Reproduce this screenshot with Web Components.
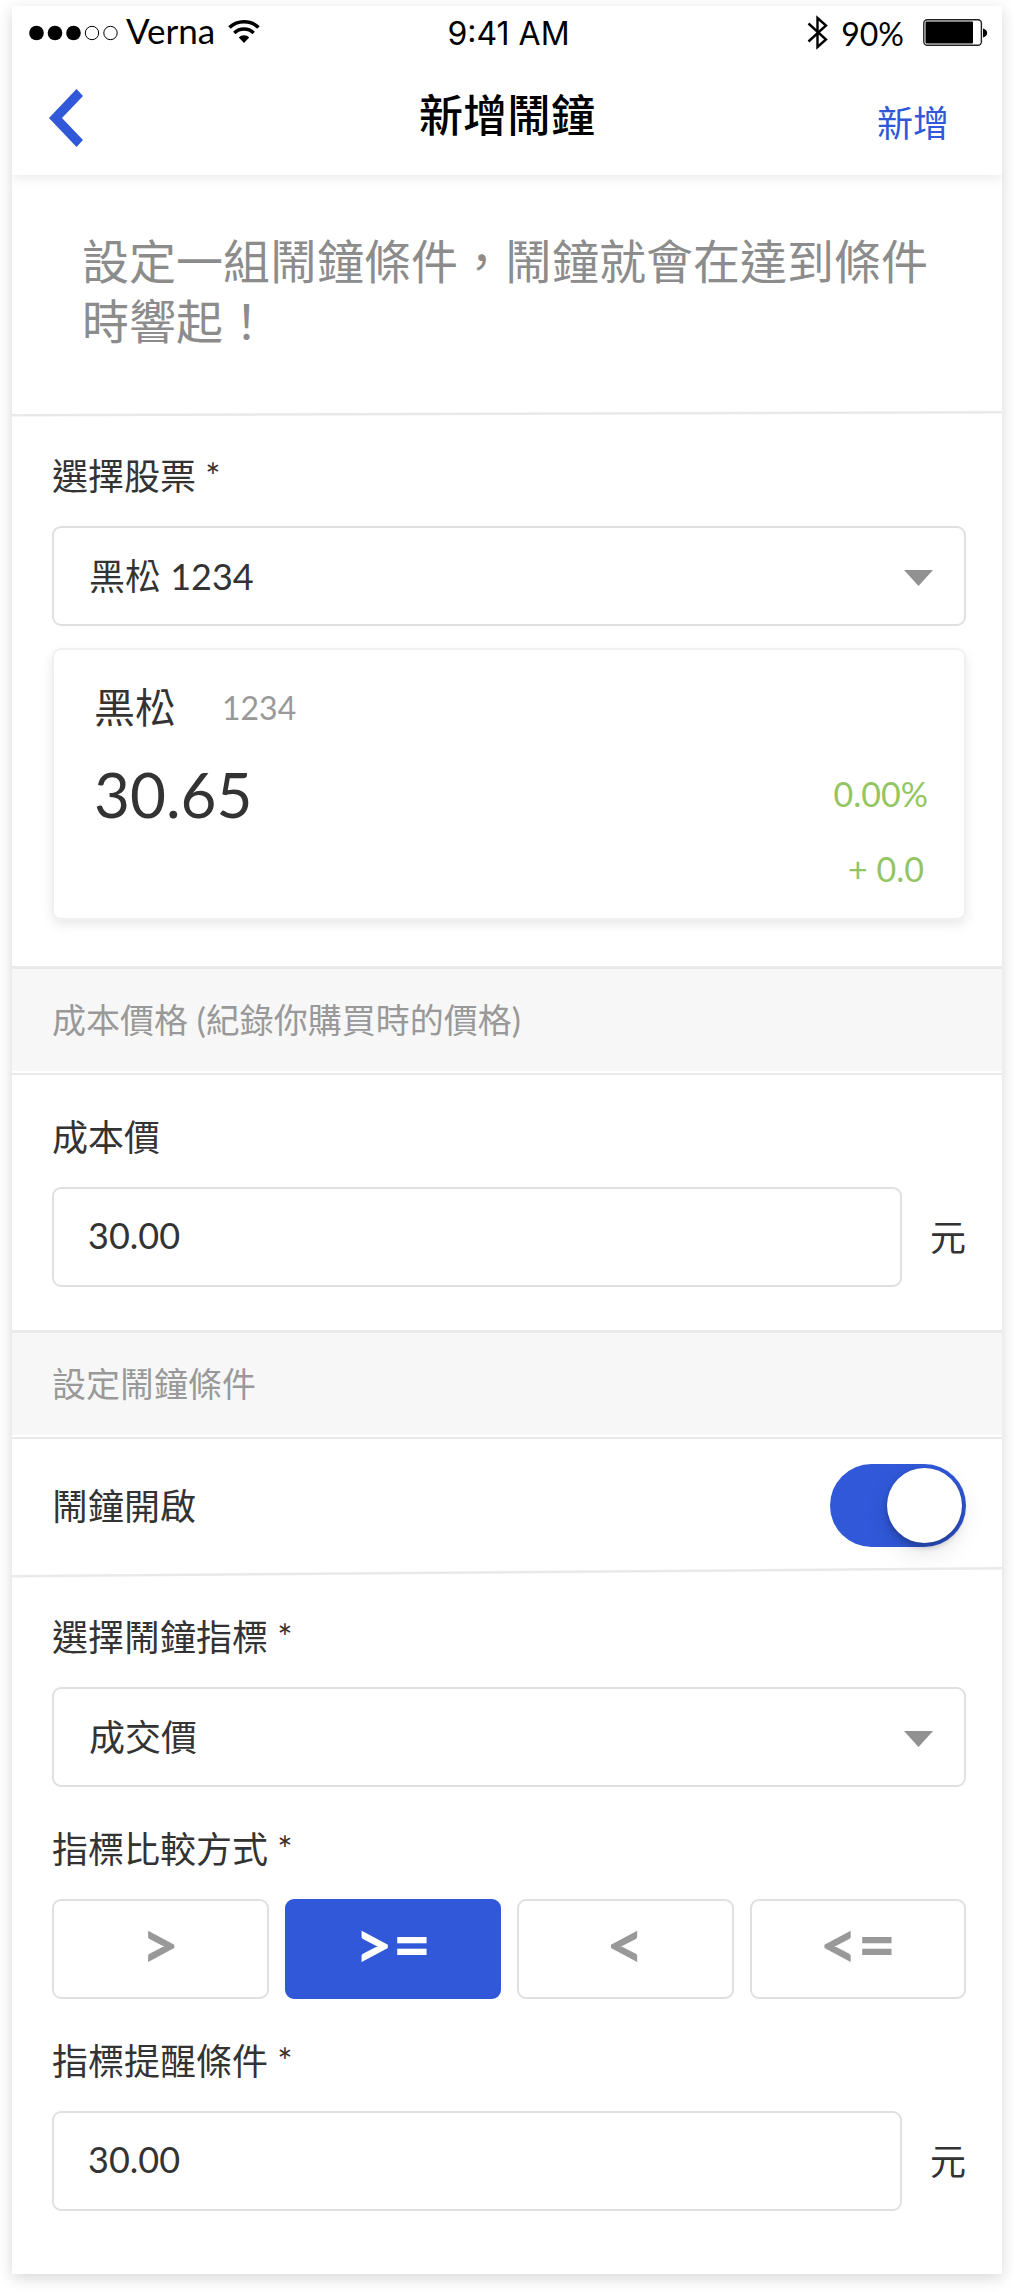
<!DOCTYPE html>
<html lang="zh-Hant">
<head>
<meta charset="utf-8">
<meta name="viewport" content="width=device-width, initial-scale=1">
<title>新增鬧鐘</title>
<style>
  :root {
    --brand: #3058d8;
    --ink: #333;
    --muted: #999;
    --line: #e9e9e9;
    --stroke: #e0e0e0;
    --up: #93c563;
    --gutter-start: 40px;
    --gutter-end: 36px;
  }
  body {
    margin: 0;
    background: #fff;
    color: var(--ink);
    font-family: Lato, "Noto Sans CJK TC", sans-serif;
    font-size: 36px;
    line-height: 44px;
  }
</style>
</head>
<body>
<alarm-screen>
  <status-bar slot="header"></status-bar>
  <nav-bar slot="header">新增鬧鐘<span slot="action">新增</span></nav-bar>

  <intro-text>設定一組鬧鐘條件，鬧鐘就會在達到條件時響起！</intro-text>
  <hair-line rise="3"></hair-line>
  <form-section after-line>
    <select-field value="黑松 1234">選擇股票 *</select-field>
    <stock-card name="黑松" code="1234" price="30.65" percent="0.00%" change="+ 0.0"></stock-card>
  </form-section>

  <section-title>成本價格 (紀錄你購買時的價格)</section-title>
  <form-section>
    <amount-field value="30.00" unit="元">成本價</amount-field>
  </form-section>

  <section-title>設定鬧鐘條件</section-title>
  <toggle-row>鬧鐘開啟</toggle-row>
  <hair-line rise="8"></hair-line>
  <form-section after-line last>
    <select-field value="成交價">選擇鬧鐘指標 *</select-field>
    <compare-field>指標比較方式 *</compare-field>
    <amount-field value="30.00" unit="元">指標提醒條件 *</amount-field>
  </form-section>
</alarm-screen>

<script>
const define = (name, render) => customElements.define(name, class extends HTMLElement {
  constructor() {
    super();
    this.attachShadow({ mode: 'open' });
  }
  connectedCallback() {
    const attr = (key) => this.getAttribute(key) || '';
    this.shadowRoot.innerHTML = '<style>*{box-sizing:border-box}:host{display:block;box-sizing:border-box}</style>' + render(attr);
  }
});

define('alarm-screen', () => `
  <style>
    :host { margin: 6px 12px 18px; background: #fff; box-shadow: 0 4px 14px rgba(0,0,0,.16); }
    header { box-shadow: 0 3px 12px rgba(0,0,0,.09); clip-path: inset(0 0 -20px 0); }
  </style>
  <header><slot name="header"></slot></header>
  <main><slot></slot></main>`);

define('status-bar', () => `
  <style>
    :host { color: #000; padding: 0 14px 0 17px; font-size: 35px; line-height: 48px; }
    .bar { display: grid; grid-template-columns: 1fr auto 1fr; height: 56px; }
    .side { display: flex; align-items: flex-start; }
    .end { justify-content: flex-end; padding-top: 4px; font-size: 32px; }
    .time { font-family: Inter, sans-serif; font-size: 32px; line-height: 56px; }
    .dots { margin: 19px 8px 0 0; }
    .wifi { margin: 13px 0 0 13px; }
    .bt { margin: 5px 13px 0 0; }
    .battery { margin: 9px 0 0 19px; }
  </style>
  <div class="bar">
    <div class="side">
      <svg class="dots" width="89" height="16" viewBox="0 0 89 16" aria-hidden="true">
        <circle cx="7.5" cy="8" r="7.3"/><circle cx="26" cy="8" r="7.3"/><circle cx="44.5" cy="8" r="7.3"/>
        <circle cx="63" cy="8" r="6.7" fill="none" stroke="#000"/><circle cx="81.5" cy="8" r="6.7" fill="none" stroke="#000"/>
      </svg>
      <span>Verna</span>
      <svg class="wifi" width="32" height="25" viewBox="0 0 32 25" fill="none" stroke="#000" aria-hidden="true">
        <path d="M1.500 8.500C9.500 .8 22.500 .8 30.500 8.500" stroke-width="3.600"/>
        <path d="M6.300 14C11.800 8.800 20.200 8.800 25.700 14" stroke-width="3.500"/>
        <path d="M10.800 18.500C13.600 15.600 18.400 15.600 21.200 18.500L16 24Z" fill="#000" stroke="none"/>
      </svg>
    </div>
    <span class="time">9:41 AM</span>
    <div class="side end">
      <svg class="bt" width="21" height="35" viewBox="0 0 21 35" fill="none" stroke="#000" stroke-width="2.400" aria-hidden="true">
        <path d="M1.500 8.500L19 24.500L10.500 32V3L19 10.500L1.500 26.500"/>
      </svg>
      <span>90%</span>
      <svg class="battery" width="65" height="27" viewBox="0 0 65 27" aria-hidden="true">
        <rect x=".8" y=".8" width="57.600" height="25.400" rx="3.500" fill="none" stroke="#222" stroke-width="1.400"/>
        <rect x="2.500" y="2.500" width="47.500" height="22" rx="1"/>
        <path d="M60 9.500C65.500 10.500 65.500 17.500 60 18.500Z"/>
      </svg>
    </div>
  </div>`);

define('nav-bar', () => `
  <style>
    :host { padding: 23px 33px 0; }
    nav { display: grid; grid-template-columns: 1fr auto 1fr; align-items: start; height: 90px; }
    h1 { margin: 0; color: #000; font-size: 44px; line-height: 60px; font-weight: 500; }
    button { border: 0; background: none; font: inherit; color: var(--brand); line-height: 44px; }
    .back { justify-self: start; display: flex; padding: 4px; }
    .add { justify-self: end; padding: 16px 20px 0 0; }
  </style>
  <nav>
    <button class="back" aria-label="返回">
      <svg width="34" height="58" viewBox="0 0 34 58"><path d="M27.500 0L34 7L13 29L34 51L27.500 58L0 29Z" fill="#3058d8"/></svg>
    </button>
    <h1><slot></slot></h1>
    <button class="add"><slot name="action"></slot></button>
  </nav>`);

define('intro-text', () => `
  <style>
    :host { padding: 56px 70px 60px; color: #8c8c8c; font-size: 47px; line-height: 60px; }
    p { margin: 0; }
  </style>
  <p><slot></slot></p>`);

define('hair-line', (attr) => {
  const rise = Number(attr('rise'));
  return `
  <style>svg { display: block; width: 100%; }</style>
  <svg height="${rise + 3}" viewBox="0 0 100 ${rise + 3}" preserveAspectRatio="none" aria-hidden="true">
    <path d="M0 ${rise}L100 0V2.500L0 ${rise + 2.5}Z" fill="#e9e9e9"/>
  </svg>`;
});

define('form-section', (attr) => `
  <style>
    :host { padding: 40px var(--gutter-end) 43px var(--gutter-start); }
    :host([after-line]) { padding-top: 37px; padding-bottom: 46px; }
    :host([last]) { padding-bottom: 63px; }
    div { display: flex; flex-direction: column; gap: 40px; }
  </style>
  <div><slot></slot></div>`);

define('section-title', () => `
  <style>
    :host { border-top: 3px solid var(--line); border-bottom: 2px solid var(--line); background: #f7f7f7;
            box-shadow: inset 0 -2px #fff; padding: 29px 40px 31px; }
    h2 { margin: 0; font-size: 34px; line-height: 44px; font-weight: 400; color: var(--muted); }
  </style>
  <h2><slot></slot></h2>`);

const fieldStyle = `
  <style>
    label, .label { display: block; margin-bottom: 28px; line-height: 44px; }
    input, select { width: 100%; height: 100px; border: 2px solid var(--stroke); border-radius: 9px; background: #fff;
      padding: 0 34px 4px; font: inherit; color: inherit; appearance: none; outline: 0; }
  </style>`;

define('select-field', (attr) => fieldStyle + `
  <style>
    .box { position: relative; }
    select { padding: 0 80px 0 35px; display: block; }
    svg { position: absolute; right: 33px; top: 44px; pointer-events: none; }
  </style>
  <label for="control"><slot></slot></label>
  <div class="box">
    <select id="control"><option>${attr('value')}</option></select>
    <svg width="29" height="16" viewBox="0 0 29 16" aria-hidden="true"><path d="M0 0H29L14.500 16Z" fill="#919191"/></svg>
  </div>`);

define('amount-field', (attr) => fieldStyle + `
  <style>
    .row { display: flex; align-items: center; gap: 28px; }
    input { flex: 1; min-width: 0; }
  </style>
  <label for="control"><slot></slot></label>
  <div class="row">
    <input id="control" type="text" inputmode="decimal" value="${attr('value')}">
    <span>${attr('unit')}</span>
  </div>`);

define('stock-card', (attr) => `
  <style>
    :host { margin-top: -18px; height: 272px; border: 2px solid #f0f0f0; border-radius: 9px;
            box-shadow: 0 5px 12px rgba(0,0,0,.09); padding: 30px 36px 26px 40px; }
    .head { display: flex; align-items: center; gap: 46px; }
    .name { font-size: 41px; line-height: 56px; }
    .code { font-size: 32px; color: var(--muted); }
    .quote { display: flex; justify-content: space-between; }
    .price { font-size: 62px; line-height: 116px; }
    .delta { color: var(--up); font-size: 34px; line-height: 75px; text-align: right; padding-top: 20px; }
    .delta div + div { padding-right: 4px; }
  </style>
  <div class="head"><span class="name">${attr('name')}</span><span class="code">${attr('code')}</span></div>
  <div class="quote">
    <span class="price">${attr('price')}</span>
    <div class="delta"><div>${attr('percent')}</div><div>${attr('change')}</div></div>
  </div>`);

define('toggle-row', () => `
  <style>
    :host { padding: 25px var(--gutter-end) 20px var(--gutter-start); }
    div { display: flex; justify-content: space-between; align-items: center; }
    input { appearance: none; margin: 0; width: 136px; height: 83px; border-radius: 42px; background: #ccc; padding: 4px; display: flex; }
    input:checked { background: var(--brand); justify-content: flex-end; }
    input::before { content: ""; width: 75px; height: 75px; border-radius: 50%; background: #fff;
      box-shadow: 0 4px 6px rgba(0,0,0,.25), 0 10px 24px rgba(0,0,0,.1); }
  </style>
  <div><label for="control"><slot></slot></label><input id="control" type="checkbox" role="switch" checked></div>`);

define('compare-field', () => fieldStyle + `
  <style>
    .group { display: grid; grid-template-columns: repeat(4, 1fr); gap: 16px; }
    button { height: 100px; border: 2px solid var(--stroke); border-radius: 9px; background: #fff; color: var(--muted);
      font-family: Lato, sans-serif; font-size: 66px; line-height: 60px; font-weight: 700; padding: 0 0 10px; }
    button[aria-pressed="true"] { background: var(--brand); border-color: var(--brand); color: #fff; }
  </style>
  <div class="label" id="caption"><slot></slot></div>
  <div class="group" role="group" aria-labelledby="caption">
    <button aria-pressed="false">&gt;</button>
    <button aria-pressed="true">&gt;=</button>
    <button aria-pressed="false">&lt;</button>
    <button aria-pressed="false">&lt;=</button>
  </div>`);
</script>
</body>
</html>
